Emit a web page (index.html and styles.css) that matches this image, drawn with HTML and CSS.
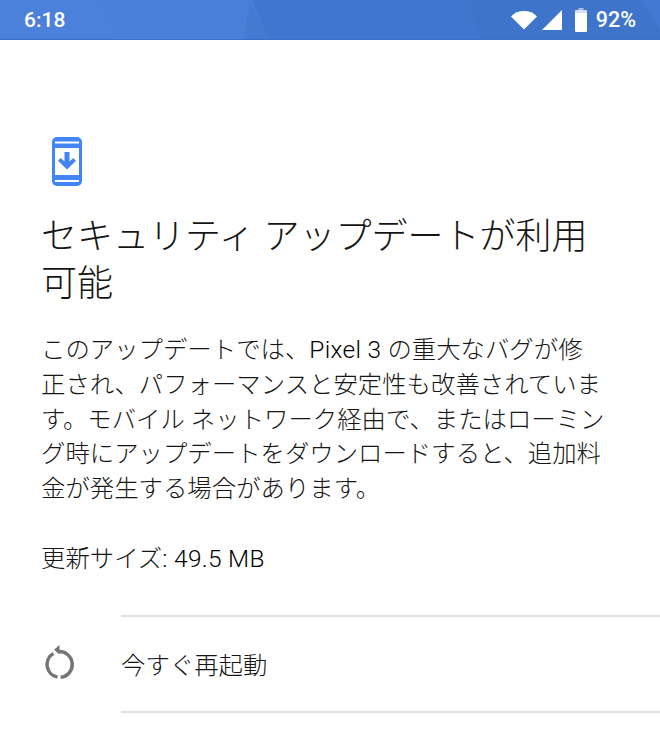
FILE: index.html
```html
<!DOCTYPE html>
<html lang="ja">
<head>
<meta charset="utf-8">
<title>セキュリティ アップデート</title>
<link rel="stylesheet" href="styles.css">
</head>
<body>
<header class="status">
  <svg class="facets" viewBox="0 0 660 40" preserveAspectRatio="none" aria-hidden="true">
    <polygon points="0,0 100,0 115,40 0,40" fill="#4b81db"/>
    <polygon points="250,0 244,40 268,40" fill="#4679d0"/>
    <polygon points="252,0 660,0 660,40 268,40" fill="#4076ce"/>
    <polygon points="470,0 660,0 660,40 480,40" fill="#3f74cb"/>
    <polygon points="640,0 660,0 660,30" fill="#4479d1"/>
  </svg>
  <span class="time">6:18</span>
  <span class="tray">
    <svg class="ic-wifi" viewBox="0 0 28 20"><path d="M14 19.500 1 6.500C4.500 2.800 9 1 14 1s9.500 1.800 13 5.500z" fill="#fff"/></svg>
    <svg class="ic-signal" viewBox="0 0 22 22"><path d="M21 1v20H1z" fill="#fff"/></svg>
    <svg class="ic-batt" viewBox="0 0 14 24"><path d="M4.500 0h5v2h-5z" fill="#a9bfe8"/><path d="M2 2h10a1 1 0 0 1 1 1v3H1V3a1 1 0 0 1 1-1z" fill="#d5e0f5"/><path d="M1 5h12v18a1 1 0 0 1-1 1H2a1 1 0 0 1-1-1z" fill="#fff"/></svg>
    <span class="pct">92%</span>
  </span>
</header>
<main class="content">
  <svg class="ic-phone" viewBox="0 0 30 49" aria-hidden="true">
    <rect x="0" y="0" width="30" height="49" rx="5" fill="#4285f4"/>
    <rect x="3" y="4.500" width="24" height="2" fill="#fff"/>
    <rect x="3" y="11" width="24" height="27" fill="#fff"/>
    <rect x="3" y="43" width="24" height="2" fill="#fff"/>
    <path d="M12.500 15h5v9.500l3.800-3.500 2.700 2.700L15 32.500l-9-8.800L8.700 21l3.800 3.500z" fill="#4285f4"/>
  </svg>
  <h1 class="title">セキュリティ アップデートが利用<br>可能</h1>
  <p class="desc">このアップデートでは、<span class="latin">Pixel 3</span> の重大なバグが修<br>正され、パフォーマンスと安定性も改善されていま<br>す。モバイル ネットワーク経由で、またはローミン<br>グ時にアップデートをダウンロードすると、追加料<br>金が発生する場合があります。</p>
  <p class="size">更新サイズ<span class="latin">: 49.5 MB</span></p>
</main>
<section class="action">
  <div class="action-icon">
    <svg class="ic-restart" viewBox="0 0 31 38" aria-hidden="true">
      <path d="M8.400 8.500A12.800 12.800 0 0 0 12.500 32.100" fill="none" stroke="#757575" stroke-width="3.500"/>
      <path d="M15.700 32.300A12.800 12.800 0 1 0 13 6.700" fill="none" stroke="#757575" stroke-width="3.500"/>
      <path d="M14.500 0v9.500L9 4.700z" fill="#757575"/>
    </svg>
  </div>
  <div class="action-label">今すぐ再起動</div>
</section>
</body>
</html>
```
FILE: styles.css
```css
* { box-sizing: border-box; }
html, body { margin: 0; padding: 0; }
body {
  width: 660px;
  height: 730px;
  overflow: hidden;
  background: #fff;
  color: #161616;
  font-family: Roboto, "Noto Sans CJK JP", sans-serif;
}
.status {
  position: relative;
  height: 40px;
  background: #4a80d9;
  border-bottom: 1px solid #3a70cc;
  display: flex;
  align-items: center;
  justify-content: space-between;
  padding: 0 24px 0 24px;
  color: #fff;
  font-size: 21px;
  font-weight: 500;
}
.facets { position: absolute; inset: 0; width: 100%; height: 39px; }
.time, .tray { position: relative; }
.tray { display: flex; align-items: center; }
.ic-wifi { width: 28px; height: 20px; margin-right: 3px; }
.ic-signal { width: 22px; height: 22px; margin-right: 11px; }
.ic-batt { width: 14px; height: 24px; margin-right: 8px; }
.pct { font-size: 21.500px; }
.content { padding: 97px 40px 0 41px; }
.ic-phone { display: block; width: 30px; height: 49px; margin: 0 0 0 11px; }
.title {
  margin: 28px 0 0;
  font-size: 36px;
  line-height: 47px;
  font-weight: 300;
  white-space: nowrap;
}
.desc {
  margin: 25px 0 0;
  font-size: 24.400px;
  line-height: 34.800px;
  font-weight: 300;
  white-space: nowrap;
}
.size {
  margin: 34px 0 0;
  font-size: 24.400px;
  line-height: 35px;
  font-weight: 300;
  white-space: nowrap;
}
.latin { font-weight: 300; letter-spacing: 0.350px; color: #000; }
.action {
  display: flex;
  height: 98px;
  margin-top: 39px;
  align-items: stretch;
}
.action-icon {
  width: 121px;
  padding-left: 45px;
  display: flex;
  align-items: center;
}
.ic-restart { width: 31px; height: 38px; }
.action-label {
  flex: 1;
  display: flex;
  align-items: center;
  font-size: 24.400px;
  font-weight: 300;
  border-top: 2px solid #e0e0e0;
  border-bottom: 2px solid #e0e0e0;
}
```
